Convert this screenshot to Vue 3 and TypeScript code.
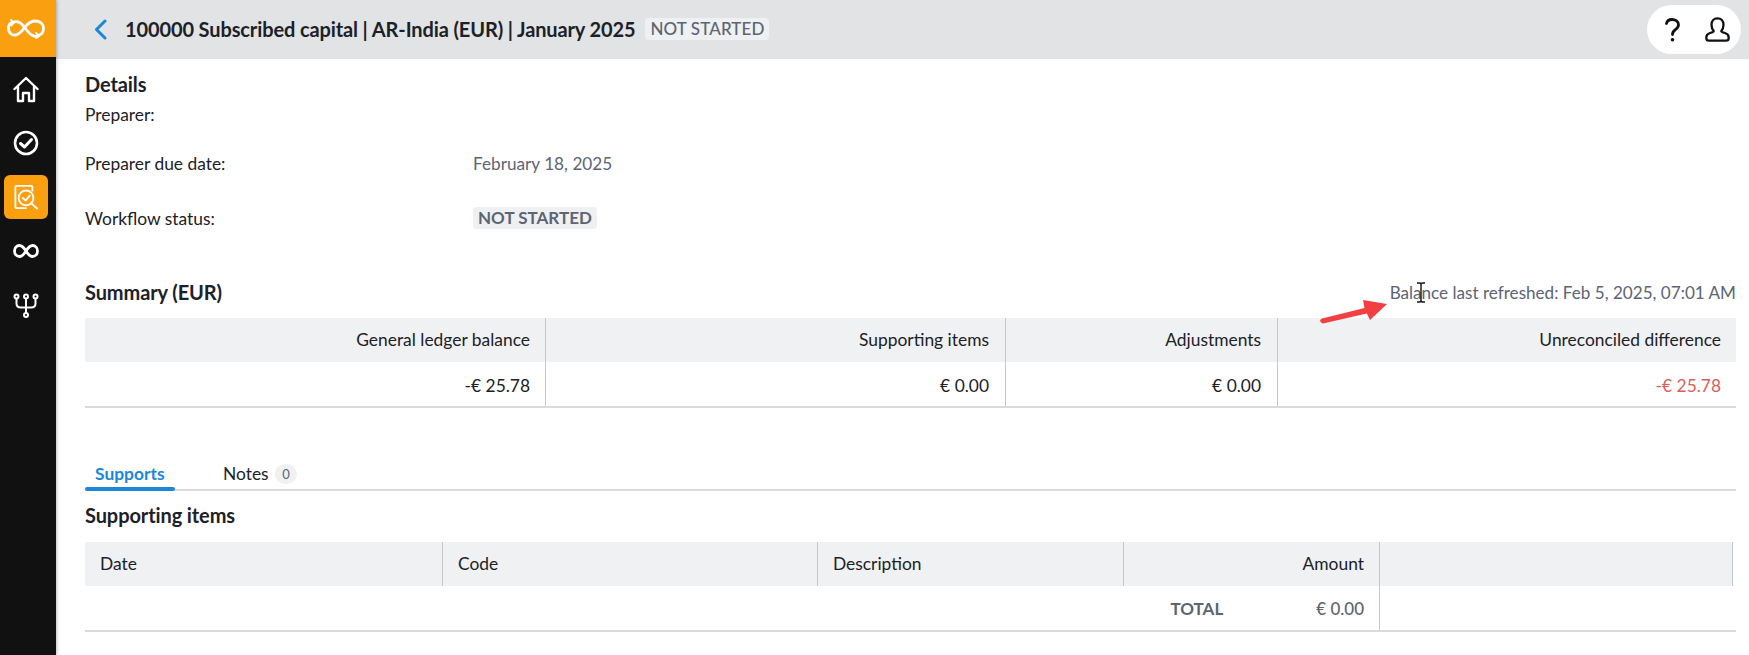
<script setup lang="ts">
const summaryHead: string[] = ['General ledger balance', 'Supporting items', 'Adjustments', 'Unreconciled difference']
const summaryRow: { text: string; neg?: boolean }[] = [
  { text: '-€ 25.78' },
  { text: '€ 0.00' },
  { text: '€ 0.00' },
  { text: '-€ 25.78', neg: true },
]
</script>

<template>
  <div class="app">
    <aside class="sidebar">
      <div class="logo">
        <svg width="38" height="20" viewBox="0 0 38 20" fill="none" stroke="#fff" stroke-width="2.800" stroke-linecap="round" stroke-linejoin="round">
          <path d="M6 3.500C3 4 1.500 6.500 1.500 9.500C1.500 13.500 4.500 16.500 8.500 16C13 15.500 15.500 11 18.500 7.500C21 4.500 24 2 28.500 2C33 2 36.500 5 36.500 9.500C36.500 13 34.500 15.500 31.500 16.500" />
          <path d="M6 3.500C10 1.500 13.500 3.500 16 6.500C19 10 21.500 14.500 25.500 16.500C27.500 17.500 29.500 17.500 31.500 17" />
          <path d="M4 1L7 3.500L4.500 6.500M29 14L32 17L29 19.200" stroke-width="1.800" />
        </svg>
      </div>
      <nav class="nav">
        <div class="nav-item">
          <svg width="26" height="27" viewBox="0 0 26 27" fill="none" stroke="#fff" stroke-width="2.400" stroke-linejoin="round" stroke-linecap="round">
            <path d="M1.500 13L13 2L24.500 13M5 10.500V25H10V17H16V25H21V10.500" />
          </svg>
        </div>
        <div class="nav-item">
          <svg width="26" height="26" viewBox="0 0 26 26" fill="none" stroke="#fff" stroke-linecap="round" stroke-linejoin="round">
            <circle cx="13" cy="13" r="11" stroke-width="2.600" />
            <path d="M7.500 13.500L11.500 17L18.500 9.500" stroke-width="3" />
          </svg>
        </div>
        <div class="nav-item active">
          <svg width="24" height="26" viewBox="0 0 26 28" fill="none" stroke="#fff" stroke-width="2" stroke-linecap="round" stroke-linejoin="round">
            <path d="M20 7V3.500C20 2.500 19.500 2 18.500 2H3C2 2 1.500 2.500 1.500 3.500V24.500C1.500 25.500 2 26 3 26H13" />
            <circle cx="13" cy="15" r="8" />
            <path d="M9.500 15L12.500 18L17 12.500M19 21L25 26.500" />
          </svg>
        </div>
        <div class="nav-item">
          <svg width="26" height="14" viewBox="0 0 26 14" fill="none" stroke="#fff" stroke-width="2.800">
            <path d="M13 7C10.500 3 9 1.500 6.500 1.500C3.500 1.500 1.500 4 1.500 7C1.500 10 3.500 12.500 6.500 12.500C9 12.500 10.500 11 13 7C15.500 3 17 1.500 19.500 1.500C22.500 1.500 24.500 4 24.500 7C24.500 10 22.500 12.500 19.500 12.500C17 12.500 15.500 11 13 7Z" />
          </svg>
        </div>
        <div class="nav-item">
          <svg width="26" height="25" viewBox="0 0 26 25" fill="none" stroke="#fff" stroke-width="2" stroke-linecap="round" stroke-linejoin="round">
            <circle cx="3.500" cy="3.500" r="2" />
            <circle cx="13" cy="3.500" r="2" />
            <circle cx="22.500" cy="3.500" r="2" />
            <circle cx="13" cy="22" r="2" />
            <path d="M3.500 6V10.500C3.500 13 5.500 14.500 8 14.500H18C20.500 14.500 22.500 13 22.500 10.500V6M13 6V19.500" />
          </svg>
        </div>
      </nav>
    </aside>

    <div class="main">
      <header class="topbar">
        <svg class="back" width="13" height="21" viewBox="0 0 13 21" fill="none" stroke="#1b87d6" stroke-width="3" stroke-linecap="round" stroke-linejoin="round">
          <path d="M11 2L2.500 10.500L11 19" />
        </svg>
        <h1 class="title">100000 Subscribed capital | AR-India (EUR) | January 2025</h1>
        <span class="badge head-badge">NOT STARTED</span>
        <div class="pill">
          <svg width="15" height="24" viewBox="0 0 15 24" fill="none" stroke="#111" stroke-width="2.800" stroke-linecap="round">
            <path d="M1.500 5.500C2 3 4.300 1.500 7 1.500C10.500 1.500 13.500 3.500 13.500 6.800C13.500 9.500 11.800 10.700 10 12C8.500 13 7.500 14 7.500 16.500" />
            <circle cx="7.500" cy="21.800" r="1.200" fill="#111" stroke-width="1.200" />
          </svg>
          <svg width="25" height="25" viewBox="0 0 25 25" fill="none" stroke="#111" stroke-width="2.300" stroke-linejoin="round">
            <path d="M8.700 14C7.300 12.500 6.500 10.300 6.500 7.800C6.500 3.800 9 1.300 12.500 1.300C16 1.300 18.500 3.800 18.500 7.800C18.500 10.300 17.700 12.500 16.300 14C16.300 15 18 15.500 20 16C22.500 16.800 23.700 18.300 23.700 20.500V21C23.700 22.800 22.800 23.700 21 23.700H4C2.200 23.700 1.300 22.800 1.300 21V20.500C1.300 18.300 2.500 16.800 5 16C7 15.500 8.700 15 8.700 14Z" />
          </svg>
        </div>
      </header>

      <main class="content">
        <h2 class="section-title">Details</h2>
        <div class="detail preparer">
          <span class="label">Preparer:</span>
        </div>
        <div class="detail due">
          <span class="label">Preparer due date:</span>
          <span class="value">February 18, 2025</span>
        </div>
        <div class="detail status">
          <span class="label">Workflow status:</span>
          <span class="badge status-badge">NOT STARTED</span>
        </div>

        <div class="summary-head">
          <h2 class="section-title">Summary (EUR)</h2>
          <span class="refreshed">Balance last refreshed: Feb 5, 2025, 07:01 AM</span>
        </div>
        <div class="grid summary">
          <div v-for="h in summaryHead" :key="h" class="cell th right">{{ h }}</div>
          <div v-for="(c, i) in summaryRow" :key="i" class="cell td right" :class="{ neg: c.neg }">{{ c.text }}</div>
        </div>

        <div class="tabs">
          <div class="tab active">Supports</div>
          <div class="tab notes">Notes <span class="count">0</span></div>
        </div>

        <h2 class="section-title items-title">Supporting items</h2>
        <div class="grid items">
          <div class="cell th">Date</div>
          <div class="cell th">Code</div>
          <div class="cell th">Description</div>
          <div class="cell th right">Amount</div>
          <div class="cell th actions"></div>
          <div class="total">
            <span class="total-label">TOTAL</span>
            <span class="total-value">€ 0.00</span>
          </div>
          <div class="cell td last"></div>
        </div>
      </main>

      <svg class="arrow" width="70" height="26" viewBox="0 0 70 26" fill="#f23f42">
        <path d="M2 24.500C0.500 23 1 21 3 20.500L45.500 10L44 2L68 6L51 22L47.800 15.500L4 25.500Z" />
      </svg>
      <svg class="cursor" width="10" height="21" viewBox="0 0 10 21" fill="none" stroke="#111" stroke-width="1.400">
        <path d="M1 1H3.500C4.500 1 5 1.500 5 2.500V18.500C5 19.500 4.500 20 3.500 20H1M9 1H6.500C5.500 1 5 1.500 5 2.500M9 20H6.500C5.500 20 5 19.500 5 18.500" />
      </svg>
    </div>
  </div>
</template>

<style>
html, body { margin: 0; background: #fff; }
</style>

<style scoped>
.app {
  display: flex;
  width: 1749px;
  height: 655px;
  overflow: hidden;
  font-family: Lato, "Liberation Sans", sans-serif;
  font-size: 17.4px;
  color: #1c2128;
  background: #fff;
}
.sidebar {
  flex: 0 0 56px;
  background: #111;
  display: flex;
  flex-direction: column;
  box-shadow: 1px 0 3px rgba(0, 0, 0, .25);
  z-index: 1;
}
.logo {
  width: 52px;
  padding-right: 4px;
  height: 57px;
  background: #fa9f0f;
  display: flex;
  align-items: center;
  justify-content: center;
}
.nav {
  width: 52px;
  display: flex;
  flex-direction: column;
  align-items: center;
  padding-top: 10px;
}
.nav-item {
  width: 44px;
  height: 44px;
  display: flex;
  align-items: center;
  justify-content: center;
  border-radius: 6px;
  margin-bottom: 10px;
}
.nav-item.active { background: #fa9f0f; }
.main { position: relative; flex: 1; min-width: 0; }
.topbar {
  height: 59px;
  background: #e1e3e5;
  display: flex;
  align-items: center;
  padding: 0 8px 0 38px;
}
.back { margin-right: 18px; }
.title {
  margin: 0 0 2px;
  font-size: 20px;
  font-weight: 700;
  letter-spacing: -.12px;
  color: #1c2128;
  white-space: nowrap;
}
.badge {
  display: inline-block;
  background: #eef0f2;
  color: #5d6472;
  font-size: 17px;
  font-weight: 700;
  line-height: 22px;
  padding: 0 5px;
  border-radius: 4px;
  white-space: nowrap;
}
.head-badge { margin: 0 0 2px 10px; font-weight: 500; letter-spacing: .1px; }
.pill {
  margin-left: auto;
  width: 94px;
  height: 49px;
  border-radius: 25px;
  background: #fff;
  display: flex;
  align-items: center;
  padding-left: 18px;
  box-sizing: border-box;
  gap: 25px;
}
.content { padding: 13px 13px 0 29px; }
.section-title {
  margin: 0;
  font-size: 20px;
  font-weight: 700;
  letter-spacing: -.1px;
  line-height: 24px;
  color: #1c2128;
}
.detail { display: flex; align-items: center; height: 24px; }
.preparer { margin-top: 6px; }
.due { margin-top: 25px; }
.status { margin-top: 31px; }
.label { flex: 0 0 388px; }
.value { color: #5d6472; font-size: 17.2px; }
.summary-head {
  display: flex;
  justify-content: space-between;
  align-items: center;
  margin-top: 50px;
  height: 24px;
}
.refreshed { color: #5d6472; font-size: 17.1px; }
.grid {
  display: grid;
  margin-top: 14px;
  border-bottom: 2px solid #d8dadd;
}
.summary { grid-template-columns: 460px 460px 272px 459px; }
.items { grid-template-columns: 357px 375px 306px 256px 357px; margin-top: 15px; }
.cell {
  height: 44px;
  line-height: 44px;
  padding: 0 15px;
  box-sizing: border-box;
  white-space: nowrap;
  border-left: 1px solid #c4c7cc;
}
.cell:first-child, .summary .cell:nth-child(5) { border-left: 0; }
.summary .cell:nth-child(2), .summary .cell:nth-child(3),
.summary .cell:nth-child(6), .summary .cell:nth-child(7) { padding-right: 16px; }
.items .cell:nth-child(5) { border-left: 1px solid #c4c7cc; border-right: 1px solid #c4c7cc; margin-right: 3px; }
.th { background: #f0f1f3; }
.td { padding-top: 2px; }
.right { text-align: right; }
.neg { color: #d9605a; }
.tabs {
  display: flex;
  align-items: flex-end;
  height: 33px;
  margin-top: 48px;
  border-bottom: 2px solid #d8dadd;
}
.tab { position: relative; height: 33px; line-height: 35px; }
.tab.active {
  width: 90px;
  padding-left: 10px;
  box-sizing: border-box;
  color: #1b87d6;
  font-weight: 700;
}
.tab.active::after {
  content: "";
  position: absolute;
  left: 0;
  right: 0;
  bottom: -2px;
  height: 4px;
  border-radius: 2px;
  background: #1b87d6;
}
.notes { margin-left: 48px; }
.count {
  display: inline-block;
  width: 22px;
  height: 20px;
  line-height: 20px;
  border-radius: 10px;
  margin-left: 2px;
  background: #f0f1f3;
  color: #5d6472;
  font-size: 13px;
  text-align: center;
  vertical-align: 1px;
}
.items-title { margin-top: 12px; }
.total {
  grid-column: 1 / span 4;
  height: 44px;
  display: flex;
  justify-content: flex-end;
  align-items: center;
  padding-right: 15px;
  color: #5d6472;
  font-size: 17px;
  font-weight: 700;
}
.total-label { margin-right: 93px; }
.total-value { font-weight: 500; }
.last { grid-column: 5; }
.arrow { position: absolute; left: 1263px; top: 298px; }
.cursor { position: absolute; left: 1360px; top: 282px; }
</style>
